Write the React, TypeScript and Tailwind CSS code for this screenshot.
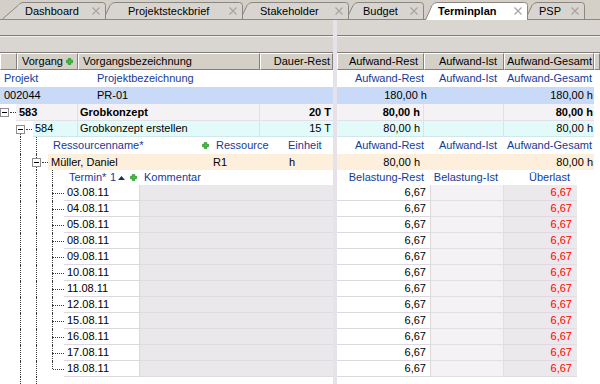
import React from "react";

type TabDef = {
  label: string;
  width: number;
  slant: number;
  ml: string;
  w: string;
  pl: string;
  z: string;
  active?: boolean;
};

const tabs: TabDef[] = [
  { label: "Dashboard", width: 83, slant: 21, ml: "ml-[23px]", w: "w-[83px]", pl: "pl-[2px]", z: "z-[6]" },
  { label: "Projektsteckbrief", width: 128, slant: 12, ml: "ml-[9px]", w: "w-[128px]", pl: "pl-[13px]", z: "z-[5]" },
  { label: "Stakeholder", width: 97, slant: 12, ml: "ml-[9px]", w: "w-[97px]", pl: "pl-[8px]", z: "z-[4]" },
  { label: "Budget", width: 66, slant: 12, ml: "ml-[9px]", w: "w-[66px]", pl: "pl-[5px]", z: "z-[3]" },
  { label: "Terminplan", width: 91, slant: 12, ml: "ml-[13px]", w: "w-[91px]", pl: "pl-[1px]", z: "z-[10]", active: true },
  { label: "PSP", width: 48, slant: 12, ml: "ml-[9px]", w: "w-[48px]", pl: "pl-[2px]", z: "z-[1]" },
];

const dates = [
  "03.08.11",
  "04.08.11",
  "05.08.11",
  "08.08.11",
  "09.08.11",
  "10.08.11",
  "11.08.11",
  "12.08.11",
  "15.08.11",
  "16.08.11",
  "17.08.11",
  "18.08.11",
];

const blue = "text-[#143b96]";
const dots = "border-dotted border-[#3a3a3a]";

export default function App() {
  return (
    <div className="h-[384px] w-[600px] overflow-hidden bg-white font-['Liberation_Sans',Arial,sans-serif] text-[11px] leading-none text-black">
      <TabBar />
      <div className="flex h-[364px]">
        <LeftPane />
        <div className="w-[4px] shrink-0 bg-[#e6e2ea]" />
        <RightPane />
      </div>
    </div>
  );
}

function TabBar() {
  return (
    <div className="flex h-[20px] items-end border-b border-[#8a8884] bg-[#d4d0c8]">
      {tabs.map((tab) => (
        <Tab key={tab.label} tab={tab} />
      ))}
    </div>
  );
}

function Tab({ tab }: { tab: TabDef }) {
  const h = tab.active ? 18 : 17;
  const S = tab.slant;
  const R = S + tab.width - 0.5;
  return (
    <div
      className={`relative flex shrink-0 items-center justify-between pr-[6px] ${tab.ml} ${tab.w} ${tab.pl} ${tab.z} ${
        tab.active ? "-mb-[1px] h-[18px] font-bold" : "h-[17px]"
      }`}
    >
      <svg className="pointer-events-none absolute top-0" style={{ left: -S }} width={S + tab.width} height={h}>
        <path
          d={`M0.5 ${h} L${S - 5} 3.5 Q${S - 3} 0.5 ${S} 0.5 L${R - 3} 0.5 Q${R} 0.5 ${R} 3.5 L${R} ${h}`}
          fill={tab.active ? "#ffffff" : "#d8d5d0"}
          stroke="#8a8783"
          strokeWidth="1"
        />
      </svg>
      <span className="relative pt-[1px]">{tab.label}</span>
      <CloseX />
    </div>
  );
}

function CloseX() {
  return (
    <svg className="relative" width="8" height="8" viewBox="0 0 8 8">
      <path d="M0.5 0.5 L7.5 7.5 M7.5 0.5 L0.5 7.5" stroke="#a8a5a0" strokeWidth="1.2" />
    </svg>
  );
}

function PlusIcon({ className = "" }: { className?: string }) {
  return (
    <svg className={`shrink-0 ${className}`} width="7" height="7" viewBox="0 0 7 7">
      <path d="M2.3 0.4h2.4v1.9h1.9v2.4h-1.9v1.9h-2.4v-1.9h-1.9v-2.4h1.9z" fill="#3cc03c" stroke="#1b7f1b" strokeWidth="0.6" />
    </svg>
  );
}

function SortUp() {
  return (
    <svg className="shrink-0" width="7" height="4" viewBox="0 0 7 4">
      <polygon points="0,4 3.5,0 7,4" fill="#1f2f5c" />
    </svg>
  );
}

function Bands() {
  return (
    <div className="flex flex-col">
      <div className="h-[15px] bg-[#d9d6d1]" />
      <div className="h-[1px] bg-[#7f7d79]" />
      <div className="h-[1px] bg-[#f2f1ef]" />
      <div className="h-[15px] bg-[#d9d6d1]" />
      <div className="h-[1px] bg-[#7f7d79]" />
    </div>
  );
}

function HeadCell({ className = "", children }: { className?: string; children?: React.ReactNode }) {
  return (
    <div
      className={`flex shrink-0 items-center border border-t-white border-l-white border-r-[#808080] border-b-[#808080] bg-[#d4d0c8] ${className}`}
    >
      {children}
    </div>
  );
}

type Guide = "none" | "line" | "elbow" | "last" | "box" | "boxDown" | "boxBoth";

function GuideCell({ kind }: { kind: Guide }) {
  if (kind === "none") return <div className="w-[16px] shrink-0" />;
  if (kind === "line")
    return (
      <div className="flex w-[16px] shrink-0">
        <div className={`ml-[4px] border-l ${dots}`} />
      </div>
    );
  if (kind === "elbow" || kind === "last")
    return (
      <div className="flex w-[16px] shrink-0">
        <div className="ml-[4px] flex flex-col">
          <div className={`flex-1 border-l ${dots}`} />
          <div className={`flex-1 ${kind === "elbow" ? `border-l ${dots}` : "pl-[1px]"}`} />
        </div>
        <div className="flex flex-1 items-center">
          <div className={`w-[11px] border-t ${dots}`} />
        </div>
      </div>
    );
  const up = kind === "boxBoth";
  const down = kind !== "box";
  return (
    <div className="flex w-[16px] shrink-0 flex-col">
      <div className={`ml-[4px] flex-1 ${up ? `border-l ${dots}` : ""}`} />
      <div className="flex items-center">
        <div className="flex h-[9px] w-[9px] items-center justify-center border border-[#8e8c8e] bg-white">
          <div className="h-[1px] w-[5px] bg-black" />
        </div>
        <div className={`ml-[1px] w-[6px] border-t ${dots}`} />
      </div>
      <div className={`ml-[4px] flex-1 ${down ? `border-l ${dots}` : ""}`} />
    </div>
  );
}

function Guides({ kinds }: { kinds: Guide[] }) {
  return (
    <div className="flex shrink-0 self-stretch">
      {kinds.map((k, i) => (
        <GuideCell key={i} kind={k} />
      ))}
    </div>
  );
}

function LeftPane() {
  return (
    <div className="flex w-[333px] shrink-0 flex-col">
      <Bands />
      <div className="flex h-[17px]">
        <HeadCell className="w-[17px]" />
        <HeadCell className="w-[61px] pl-[4px]">
          Vorgang
          <PlusIcon className="ml-auto mr-[4px]" />
        </HeadCell>
        <HeadCell className="w-[182px] pl-[4px]">Vorgangsbezeichnung</HeadCell>
        <HeadCell className="w-[73px] justify-end pr-[2px]">Dauer-Rest</HeadCell>
      </div>

      <div className={`flex h-[17px] items-center ${blue}`}>
        <span className="w-[97px] pl-[4px]">Projekt</span>
        <span>Projektbezeichnung</span>
      </div>
      <div className="flex h-[17px] items-center bg-[#c8daf7]">
        <span className="w-[97px] pl-[4px]">002044</span>
        <span>PR-01</span>
      </div>

      <div className="flex h-[17px]">
        <Guides kinds={["box"]} />
        <div className="flex flex-1 bg-[#f4f2f5] font-bold">
          <div className="flex w-[62px] items-center border-r border-b border-[#e2dfe5] pl-[3px]">583</div>
          <div className="flex w-[182px] items-center border-r border-b border-[#e2dfe5] pl-[2px]">Grobkonzept</div>
          <div className="flex flex-1 items-center justify-end border-b border-[#e2dfe5] pr-[2px]">20 T</div>
        </div>
      </div>

      <div className="flex h-[16px]">
        <Guides kinds={["none", "boxDown"]} />
        <div className="ml-[1px] flex flex-1 bg-[#e3fafa]">
          <div className="flex w-[45px] items-center border-r border-b border-[#cfe9ea] pl-[2px]">584</div>
          <div className="flex w-[182px] items-center border-r border-b border-[#cfe9ea] pl-[2px]">
            Grobkonzept erstellen
          </div>
          <div className="flex flex-1 items-center justify-end border-b border-[#cfe9ea] pr-[2px]">15 T</div>
        </div>
      </div>

      <div className="flex h-[17px]">
        <Guides kinds={["none", "line", "line"]} />
        <div className={`flex flex-1 items-center ${blue}`}>
          <span className="w-[154px] pl-[5px]">Ressourcenname*</span>
          <PlusIcon />
          <span className="ml-[7px] w-[72px]">Ressource</span>
          <span>Einheit</span>
        </div>
      </div>

      <div className="flex h-[16px]">
        <Guides kinds={["none", "line", "boxBoth"]} />
        <div className="flex flex-1 items-center bg-[#fdefdb]">
          <span className="w-[165px] pl-[3px]">Müller, Daniel</span>
          <span className="w-[76px]">R1</span>
          <span>h</span>
        </div>
      </div>

      <div className="flex h-[15px]">
        <Guides kinds={["none", "line", "line", "line"]} />
        <div className={`flex flex-1 items-center ${blue}`}>
          <span className="w-[46px] pl-[5px]">Termin*</span>
          <span className="w-[8px]">1</span>
          <SortUp />
          <PlusIcon className="ml-[5px]" />
          <span className="ml-[7px]">Kommentar</span>
        </div>
      </div>

      {dates.map((d, i) => (
        <div key={d} className="flex h-[16px]">
          <Guides kinds={["none", "line", "line", i === dates.length - 1 ? "last" : "elbow"]} />
          <div className="flex w-[76px] items-center border-r border-b border-[#dcd9dd] bg-white pl-[3px]">{d}</div>
          <div className="flex-1 border-b border-[#dfdbe1] bg-[#ebe8ec]" />
        </div>
      ))}

      <div className="flex flex-1">
        <Guides kinds={["none", "line", "line"]} />
      </div>
    </div>
  );
}

function RightPane() {
  return (
    <div className="flex flex-1 flex-col">
      <Bands />
      <div className="flex h-[17px]">
        <HeadCell className="w-[87px] justify-end pr-[5px]">Aufwand-Rest</HeadCell>
        <HeadCell className="w-[80px] justify-end pr-[6px]">Aufwand-Ist</HeadCell>
        <HeadCell className="w-[90px] justify-end pr-[1px]">Aufwand-Gesamt</HeadCell>
        <HeadCell className="flex-1" />
      </div>

      <LabelRow a="Aufwand-Rest" b="Aufwand-Ist" c="Aufwand-Gesamt" />

      <div className="flex h-[17px]">
        <div className="flex w-[257px] items-center bg-[#c8daf7]">
          <span className="w-[90px] text-right">180,00 h</span>
          <span className="w-[167px] pr-[1px] text-right">180,00 h</span>
        </div>
      </div>

      <div className="flex h-[17px]">
        <div className="flex w-[257px] bg-[#f4f2f5] font-bold">
          <div className="flex w-[87px] items-center justify-end border-r border-b border-[#e2dfe5] pr-[3px]">80,00 h</div>
          <div className="w-[80px] border-r border-b border-[#e2dfe5]" />
          <div className="flex flex-1 items-center justify-end border-b border-[#e2dfe5] pr-[1px]">80,00 h</div>
        </div>
      </div>

      <div className="flex h-[16px]">
        <div className="flex w-[257px] bg-[#e3fafa]">
          <div className="flex w-[87px] items-center justify-end border-r border-b border-[#cfe9ea] pr-[3px]">80,00 h</div>
          <div className="w-[80px] border-r border-b border-[#cfe9ea]" />
          <div className="flex flex-1 items-center justify-end border-b border-[#cfe9ea] pr-[1px]">80,00 h</div>
        </div>
      </div>

      <LabelRow a="Aufwand-Rest" b="Aufwand-Ist" c="Aufwand-Gesamt" />

      <div className="flex h-[16px]">
        <div className="flex w-[257px] items-center bg-[#fdefdb]">
          <span className="w-[87px] pr-[4px] text-right">80,00 h</span>
          <span className="w-[170px] pr-[1px] text-right">80,00 h</span>
        </div>
      </div>

      <div className={`flex h-[15px] items-center ${blue}`}>
        <span className="w-[94px] pr-[7px] text-right">Belastung-Rest</span>
        <span className="w-[73px] pr-[6px] text-right">Belastung-Ist</span>
        <span className="w-[73px] pr-[7px] text-right">Überlast</span>
      </div>

      {dates.map((d) => (
        <div key={d} className="flex h-[16px]">
          <div className="flex w-[94px] items-center justify-end border-r border-b border-[#dcd9dd] bg-white pr-[4px]">6,67</div>
          <div className="w-[73px] border-r border-b border-[#e2dfe3] bg-[#f5f2f5]" />
          <div className="flex w-[73px] items-center justify-end border-b border-[#dfdbe1] bg-[#ece9ed] pr-[5px] text-[#ff0000]">
            6,67
          </div>
        </div>
      ))}
    </div>
  );
}

function LabelRow({ a, b, c }: { a: string; b: string; c: string }) {
  return (
    <div className={`flex h-[17px] items-center ${blue}`}>
      <span className="w-[87px] text-right">{a}</span>
      <span className="w-[80px] pr-[7px] text-right">{b}</span>
      <span className="w-[90px] pr-[2px] text-right">{c}</span>
    </div>
  );
}
